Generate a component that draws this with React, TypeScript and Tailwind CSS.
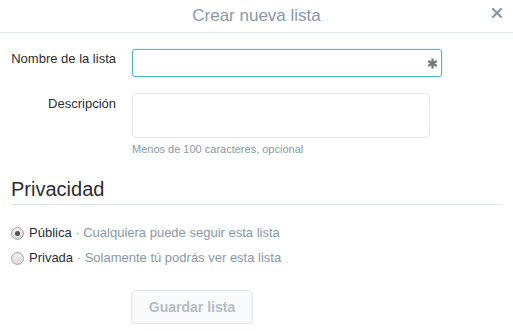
import React from "react";

function Radio({ checked }: { checked?: boolean }) {
  return (
    <span className="relative inline-block w-[13px] h-[13px] rounded-full border border-[#a6a6a6] bg-gradient-to-b from-[#f0f0f0] to-[#dcdcdc] shrink-0">
      {checked && (
        <span className="absolute left-[3px] top-[3px] w-[5px] h-[5px] rounded-full bg-[#555]" />
      )}
    </span>
  );
}

export default function App() {
  return (
    <div className="w-[513px] h-[331px] bg-white font-['Liberation_Sans',Arial,sans-serif] text-[#292f33] overflow-hidden">
      <div className="relative h-[33px] border-b border-[#e1e8ed] flex items-center justify-center">
        <span className="text-[17px] text-[#8899a6] leading-none -mt-[1px]">Crear nueva lista</span>
        <svg className="absolute left-[492px] top-[8px]" width="10" height="10" viewBox="0 0 10 10">
          <path d="M1 1 L9 9 M9 1 L1 9" stroke="#8899a6" strokeWidth="2.2" strokeLinecap="square" />
        </svg>
      </div>

      <div className="pt-[16px]">
        <div className="flex items-start">
          <label className="w-[116px] text-right text-[13px] leading-none pt-[3px]">Nombre de la lista</label>
          <div className="ml-[16px] relative w-[310px] h-[28px] border border-[#4fb8cf] rounded-[3px] shadow-[0_0_2px_rgba(79,184,207,0.6)] flex items-center justify-end pr-[3px]">
            <svg width="11" height="11" viewBox="0 0 11 11">
              <path d="M5.5 0.5 V10.5 M1.2 3 L9.8 8 M9.8 3 L1.2 8" stroke="#777" strokeWidth="2.2" />
            </svg>
          </div>
        </div>

        <div className="flex items-start mt-[16px]">
          <label className="w-[116px] text-right text-[13px] leading-none pt-[4px]">Descripción</label>
          <div className="ml-[16px]">
            <div className="w-[298px] h-[45px] border border-[#e1e8ed] rounded-[4px]" />
            <div className="mt-[6px] text-[11px] text-[#8899a6] leading-none">Menos de 100 caracteres, opcional</div>
          </div>
        </div>

        <div className="mx-[11px] mt-[24px] pb-[5px] border-b border-[#e1e8ed]">
          <h2 className="text-[20px] leading-none">Privacidad</h2>
        </div>

        <div className="ml-[11px] mt-[21px] flex flex-col gap-[11px] text-[13px] leading-[14px]">
          <div className="flex items-center gap-[5px]">
            <Radio checked />
            <span>
              Pública <span className="text-[#8899a6]">· Cualquiera puede seguir esta lista</span>
            </span>
          </div>
          <div className="flex items-center gap-[5px]">
            <Radio />
            <span>
              Privada <span className="text-[#8899a6]">· Solamente tú podrás ver esta lista</span>
            </span>
          </div>
        </div>

        <div className="ml-[131px] mt-[25px]">
          <button className="w-[122px] h-[34px] rounded-[4px] border border-[#e1e8ed] bg-[#f9fafb] text-[#b5bec5] text-[14px] font-bold">
            Guardar lista
          </button>
        </div>
      </div>
    </div>
  );
}
